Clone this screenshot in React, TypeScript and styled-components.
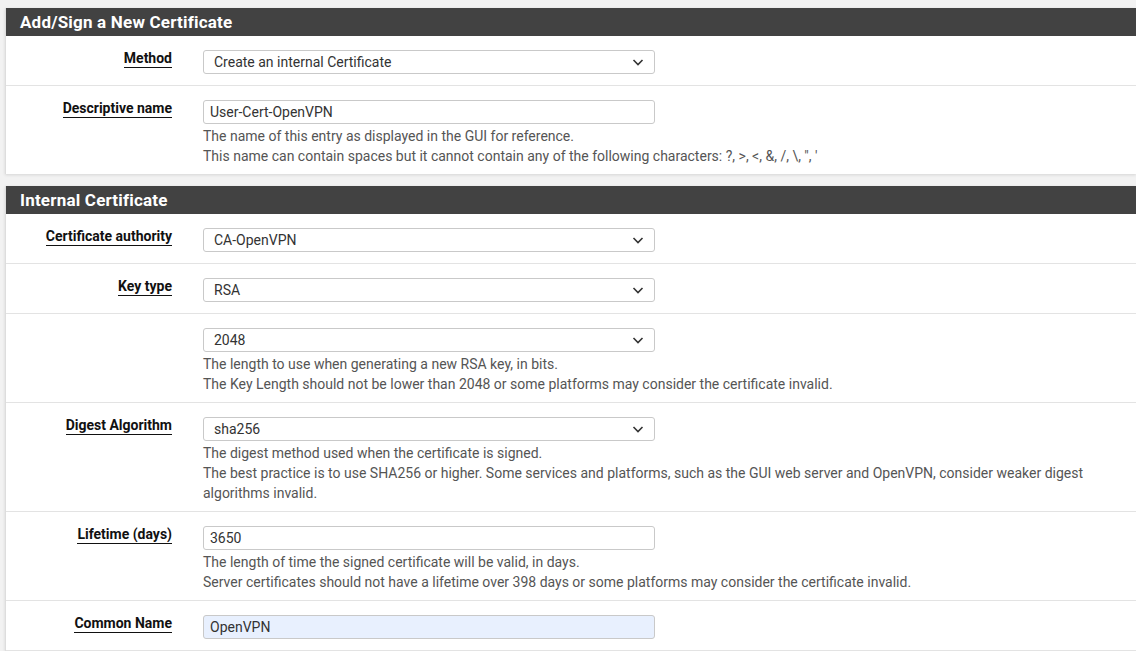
import React from "react";
import styled, { createGlobalStyle } from "styled-components";

const Global = createGlobalStyle`
  body {
    margin: 0;
    background: #f2f2f2;
    font-family: Roboto, "Liberation Sans", sans-serif;
    font-size: 14px;
    color: #212121;
  }
`;

const Page = styled.div`
  padding: 8px 0 0 5px;
`;

const Panel = styled.section`
  background: #fff;
  border-left: 1px solid #ddd;
  box-shadow: 0 1px 3px rgba(0, 0, 0, 0.12);
  margin-bottom: 12px;
`;

const Heading = styled.h2`
  margin: 0;
  height: 28px;
  line-height: 28px;
  padding: 0 14px;
  background: #424242;
  color: #fff;
  font-size: 17px;
  font-weight: 700;
  letter-spacing: 0.2px;
`;

const Row = styled.div<{ last?: boolean; hasHelp?: boolean }>`
  display: grid;
  grid-template-columns: 166px 452px;
  column-gap: 31px;
  padding: 14px 0 ${({ hasHelp }) => (hasHelp ? "8px" : "11px")};
  border-bottom: ${({ last }) => (last ? "none" : "1px solid #e3e3e3")};
`;

const Label = styled.div`
  text-align: right;
  span {
    font-weight: 700;
    color: #111;
    border-bottom: 1px solid #111;
    padding-bottom: 1px;
  }
`;

const Field = styled.div``;

const Box = styled.div<{ filled?: boolean; select?: boolean }>`
  height: 22px;
  border: 1px solid #c9c9c9;
  border-radius: 3px;
  background: ${({ filled }) => (filled ? "#e8f0fe" : "#fff")};
  display: flex;
  align-items: center;
  justify-content: space-between;
  padding: 0 10px 0 ${({ select }) => (select ? "10px" : "6px")};
  color: #333;
`;

const Help = styled.div`
  width: 920px;
  margin-top: 2px;
  line-height: 20px;
  color: #555;
`;

const Chevron = () => (
  <svg width="12" height="12" viewBox="0 0 12 12">
    <path d="M1.5 4 L6 8.5 L10.5 4" fill="none" stroke="#333" strokeWidth="1.6" />
  </svg>
);

type RowProps = { label?: string; value: string; select?: boolean; filled?: boolean; help?: string[]; last?: boolean };

const FormRow = ({ label, value, select, filled, help, last }: RowProps) => (
  <Row last={last} hasHelp={!!help}>
    <Label>{label && <span>{label}</span>}</Label>
    <Field>
      <Box filled={filled} select={select}>
        <span>{value}</span>
        {select && <Chevron />}
      </Box>
      {help && <Help>{help.map((h, i) => <div key={i}>{h}</div>)}</Help>}
    </Field>
  </Row>
);

export default function App() {
  return (
    <>
      <Global />
      <Page>
        <Panel>
          <Heading>Add/Sign a New Certificate</Heading>
          <FormRow label="Method" value="Create an internal Certificate" select />
          <FormRow
            label="Descriptive name"
            value="User-Cert-OpenVPN"
            last
            help={[
              "The name of this entry as displayed in the GUI for reference.",
              "This name can contain spaces but it cannot contain any of the following characters: ?, >, <, &, /, \\, \", '",
            ]}
          />
        </Panel>
        <Panel>
          <Heading>Internal Certificate</Heading>
          <FormRow label="Certificate authority" value="CA-OpenVPN" select />
          <FormRow label="Key type" value="RSA" select />
          <FormRow
            value="2048"
            select
            help={[
              "The length to use when generating a new RSA key, in bits.",
              "The Key Length should not be lower than 2048 or some platforms may consider the certificate invalid.",
            ]}
          />
          <FormRow
            label="Digest Algorithm"
            value="sha256"
            select
            help={[
              "The digest method used when the certificate is signed.",
              "The best practice is to use SHA256 or higher. Some services and platforms, such as the GUI web server and OpenVPN, consider weaker digest",
              "algorithms invalid.",
            ]}
          />
          <FormRow
            label="Lifetime (days)"
            value="3650"
            help={[
              "The length of time the signed certificate will be valid, in days.",
              "Server certificates should not have a lifetime over 398 days or some platforms may consider the certificate invalid.",
            ]}
          />
          <FormRow label="Common Name" value="OpenVPN" filled />
        </Panel>
      </Page>
    </>
  );
}
